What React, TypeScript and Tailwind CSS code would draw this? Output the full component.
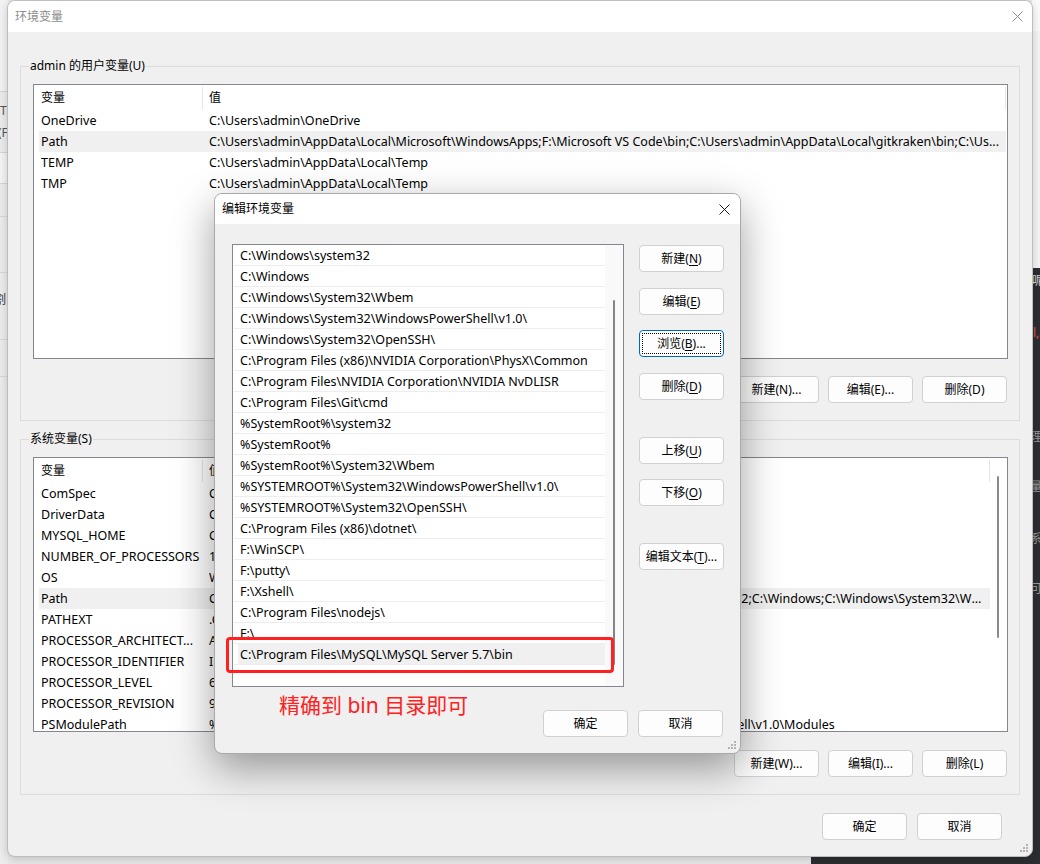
import React from "react";

type Row = { name: string; value: string };

const userRows: Row[] = [
  { name: "OneDrive", value: "C:\\Users\\admin\\OneDrive" },
  {
    name: "Path",
    value:
      "C:\\Users\\admin\\AppData\\Local\\Microsoft\\WindowsApps;F:\\Microsoft VS Code\\bin;C:\\Users\\admin\\AppData\\Local\\gitkraken\\bin;C:\\Us...",
  },
  { name: "TEMP", value: "C:\\Users\\admin\\AppData\\Local\\Temp" },
  { name: "TMP", value: "C:\\Users\\admin\\AppData\\Local\\Temp" },
];

const sysRows: Row[] = [
  { name: "ComSpec", value: "C:\\Windows\\system32\\cmd.exe" },
  { name: "DriverData", value: "C:\\Windows\\System32\\Drivers\\DriverData" },
  { name: "MYSQL_HOME", value: "C:\\Program Files\\MySQL\\MySQL Server 5.7" },
  { name: "NUMBER_OF_PROCESSORS", value: "16" },
  { name: "OS", value: "Windows_NT" },
  {
    name: "Path",
    value:
      "C:\\Program Files (x86)\\Common Files\\Oracle\\Java\\javapath;C:\\Go\\bin\\;C:\\Windows\\system32;C:\\Windows;C:\\Windows\\System32\\Wb...",
  },
  { name: "PATHEXT", value: ".COM;.EXE;.BAT;.CMD;.VBS;.VBE;.JS;.JSE;.WSF;.WSH;.MSC" },
  { name: "PROCESSOR_ARCHITECT...", value: "AMD64" },
  { name: "PROCESSOR_IDENTIFIER", value: "Intel64 Family 6 Model 165 Stepping 5, GenuineIntel" },
  { name: "PROCESSOR_LEVEL", value: "6" },
  { name: "PROCESSOR_REVISION", value: "9e0d" },
  {
    name: "PSModulePath",
    value: "%ProgramFiles%\\WindowsPowerShell\\Modules;C:\\WINDOWS\\system32\\WindowsPowerShell\\v1.0\\Modules",
  },
];

const pathItems = [
  "C:\\Windows\\system32",
  "C:\\Windows",
  "C:\\Windows\\System32\\Wbem",
  "C:\\Windows\\System32\\WindowsPowerShell\\v1.0\\",
  "C:\\Windows\\System32\\OpenSSH\\",
  "C:\\Program Files (x86)\\NVIDIA Corporation\\PhysX\\Common",
  "C:\\Program Files\\NVIDIA Corporation\\NVIDIA NvDLISR",
  "C:\\Program Files\\Git\\cmd",
  "%SystemRoot%\\system32",
  "%SystemRoot%",
  "%SystemRoot%\\System32\\Wbem",
  "%SYSTEMROOT%\\System32\\WindowsPowerShell\\v1.0\\",
  "%SYSTEMROOT%\\System32\\OpenSSH\\",
  "C:\\Program Files (x86)\\dotnet\\",
  "F:\\WinSCP\\",
  "F:\\putty\\",
  "F:\\Xshell\\",
  "C:\\Program Files\\nodejs\\",
  "F:\\",
  "C:\\Program Files\\MySQL\\MySQL Server 5.7\\bin",
];

const CloseX = ({ color }: { color: string }) => (
  <svg width="11" height="11" viewBox="0 0 11 11">
    <path d="M0.5 0.5 L10.5 10.5 M10.5 0.5 L0.5 10.5" stroke={color} strokeWidth="1" fill="none" />
  </svg>
);

const Grip = () => (
  <svg width="9" height="9" viewBox="0 0 9 9">
    <rect x="6" y="0" width="2" height="2" fill="#b4b4b4" />
    <rect x="3" y="3" width="2" height="2" fill="#b4b4b4" />
    <rect x="6" y="3" width="2" height="2" fill="#b4b4b4" />
    <rect x="0" y="6" width="2" height="2" fill="#b4b4b4" />
    <rect x="3" y="6" width="2" height="2" fill="#b4b4b4" />
    <rect x="6" y="6" width="2" height="2" fill="#b4b4b4" />
  </svg>
);

type BtnProps = {
  pre: string;
  mn?: string;
  post?: string;
  focused?: boolean;
  className?: string;
};

const Btn = ({ pre, mn, post = "", focused = false, className = "" }: BtnProps) => (
  <div
    className={`relative h-[27px] w-[85px] shrink-0 flex items-center justify-center rounded-[4px] border bg-[#fdfdfd] text-[12px] text-black ${
      focused ? "border-[#0067c0]" : "border-[#d0d0d0]"
    } ${className}`}
  >
    {focused && <div className="absolute inset-[2px] border border-dotted border-black" />}
    <span>
      {pre}
      {mn && <span className="underline underline-offset-2">{mn}</span>}
      {post}
    </span>
  </div>
);

const PlainBtn = ({ label, className = "" }: { label: string; className?: string }) => (
  <div
    className={`h-[27px] w-[85px] shrink-0 flex items-center justify-center rounded-[4px] border border-[#d0d0d0] bg-[#fdfdfd] text-[12px] text-black ${className}`}
  >
    {label}
  </div>
);

const VarList = ({ rows, selected, scroll }: { rows: Row[]; selected: number; scroll: boolean }) => (
  <div className="flex h-[275px] w-[975px] border border-[#828790] bg-white overflow-hidden">
    <div className="flex-1 min-w-0 flex flex-col">
      <div className="flex h-[25px] shrink-0">
        <div className="w-[169px] pl-[7px] flex items-center border-r border-[#e5e5e5] mt-[2px] mb-[1px]">变量</div>
        <div
          className={`flex-1 pl-[6px] flex items-center mt-[2px] mb-[1px] border-r border-[#e5e5e5] ${
            scroll ? "" : "mr-[1px]"
          }`}
        >
          值
        </div>
      </div>
      <div className={`ml-[5px] text-[12.5px] ${scroll ? "" : "mr-[1px]"}`}>
        {rows.map((r, i) => (
          <div key={r.name} className={`flex h-[21px] items-center pt-[1px] ${i === selected ? "bg-[#f0f0f0]" : ""}`}>
            <div className="w-[170px] shrink-0 pl-[2px] whitespace-nowrap overflow-hidden">{r.name}</div>
            <div className="flex-1 min-w-0 whitespace-nowrap overflow-hidden text-ellipsis pr-[2px]">{r.value}</div>
          </div>
        ))}
      </div>
    </div>
    {scroll && (
      <div className="w-[17px] shrink-0 bg-white pt-[18px] pl-[7px]">
        <div className="w-[2px] h-[162px] rounded-full bg-[#8a8a8a]" />
      </div>
    )}
  </div>
);

const Group = ({ label, children, className = "" }: { label: string; children: React.ReactNode; className?: string }) => (
  <div className={`relative border border-[#dcdcdc] px-[12px] ${className}`}>
    <div className="absolute left-[8px] -top-[9px] bg-[#f0f0f0] px-[1px] leading-[16px]">{label}</div>
    {children}
  </div>
);

export default function App() {
  return (
    <div className="relative w-[1040px] h-[864px] overflow-hidden bg-[#e8e8e8] text-[12px] text-black font-['Noto_Sans','Noto_Sans_CJK_SC',sans-serif]">
      {/* windows behind */}
      <div className="absolute left-0 top-0 w-[8px] h-[864px] bg-[#ececec]">
        <div className="h-[92px] border-b border-[#d6d6d6] bg-[#f3f3f3]" />
        <div className="h-[61px] border-b border-[#d6d6d6] relative overflow-hidden">
          <span className="absolute -left-[4px] top-[10px] text-[#555]">IT</span>
          <span className="absolute -left-[2px] top-[32px] text-[#555]">(F</span>
        </div>
        <div className="h-[31px] border-b border-[#d6d6d6] bg-[#f4f4f4]" />
        <div className="h-[33px] border-b border-[#d6d6d6]" />
        <div className="h-[56px] border-b border-[#d6d6d6]" />
        <div className="h-[67px] border-b border-[#d6d6d6] relative overflow-hidden">
          <span className="absolute -left-[6px] top-[18px] text-[#333]">割</span>
        </div>
        <div className="h-[37px] border-b border-[#d6d6d6]" />
      </div>
      <div className="absolute left-[1032px] top-0 w-[8px] h-[268px] bg-[#f4f4f4] border-t-[31px] border-[#fbfbfb]" />
      <div className="absolute left-[811px] top-[268px] right-0 bottom-0 bg-[#2b2d30] overflow-hidden">
        <span className="absolute left-[221px] top-[4px] text-[#d8d8d8]">呢</span>
        <span className="absolute left-[222px] top-[56px] text-[#e25050]">l,</span>
        <span className="absolute left-[219px] top-[160px] text-[#9a9a9a]">理</span>
        <span className="absolute left-[219px] top-[210px] text-[#9a9a9a]">量</span>
        <span className="absolute left-[219px] top-[262px] text-[#9a9a9a]">系</span>
        <span className="absolute left-[219px] top-[312px] text-[#9a9a9a]">可</span>
      </div>

      {/* main window */}
      <div className="absolute left-[7px] top-0 w-[1026px] h-[857px] flex flex-col rounded-[8px] border border-[#bdbdbd] bg-[#f0f0f0] shadow-[0_2px_10px_rgba(0,0,0,0.18)] overflow-hidden">
        <div className="h-[31px] shrink-0 bg-white flex items-center justify-between pl-[7px] pr-[9px]">
          <span className="text-[#8c8c8c]">环境变量</span>
          <CloseX color="#8c8c8c" />
        </div>
        <div className="flex-1 flex flex-col pt-[34px] pl-[12px] pr-[12px] relative">
          <Group label="admin 的用户变量(U)" className="h-[355px] pt-[17px]">
            <VarList rows={userRows} selected={1} scroll={false} />
            <div className="flex justify-end gap-[9px] mt-[17px]">
              <PlainBtn label="新建(N)..." />
              <PlainBtn label="编辑(E)..." />
              <PlainBtn label="删除(D)" />
            </div>
          </Group>
          <Group label="系统变量(S)" className="h-[356px] mt-[18px] pt-[17px]">
            <VarList rows={sysRows} selected={5} scroll={true} />
            <div className="flex justify-end gap-[9px] mt-[18px]">
              <PlainBtn label="新建(W)..." />
              <PlainBtn label="编辑(I)..." />
              <PlainBtn label="删除(L)" />
            </div>
          </Group>
          <div className="flex justify-end gap-[10px] mt-[18px] pr-[18px]">
            <PlainBtn label="确定" />
            <PlainBtn label="取消" />
          </div>
          <div className="absolute right-[3px] bottom-[3px]">
            <Grip />
          </div>
        </div>
      </div>

      {/* edit dialog */}
      <div className="absolute left-[214px] top-[193px] w-[527px] h-[561px] flex flex-col rounded-[8px] border border-[#a9a9a9] bg-[#f0f0f0] shadow-[0_14px_40px_rgba(0,0,0,0.38)] overflow-hidden">
        <div className="h-[30px] shrink-0 bg-white flex items-center justify-between pl-[7px] pr-[10px]">
          <span>编辑环境变量</span>
          <CloseX color="#1a1a1a" />
        </div>
        <div className="flex-1 flex flex-col pt-[20px] pl-[17px] relative">
          <div className="flex">
            <div className="relative w-[392px] h-[443px]">
              <div className="flex w-full h-full border border-[#828790] bg-white overflow-hidden">
                <div className="w-[372px] pl-[1px] text-[12.5px]">
                  {pathItems.map((p, i) => (
                    <div key={p} className="h-[21px] border-b border-[#ededed]">
                      <div
                        className={`h-full flex items-center pt-[3px] whitespace-nowrap ${
                          i === pathItems.length - 1 ? "ml-[4px] pl-[2px] bg-[#f0f0f0]" : "pl-[6px]"
                        }`}
                      >
                        {p}
                      </div>
                    </div>
                  ))}
                </div>
                <div className="flex-1 bg-[#f9f9f9] pt-[55px] pl-[8px]">
                  <div className="w-[2px] h-[365px] rounded-full bg-[#858585]" />
                </div>
              </div>
              <div className="absolute -left-[6px] top-[393px] w-[388px] h-[36px] border-[3px] border-[#ff2020] rounded-[4px]" />
            </div>
            <div className="ml-[15px] mt-[1px] flex flex-col">
              <Btn pre="新建(" mn="N" post=")" />
              <Btn pre="编辑(" mn="E" post=")" className="mt-[16px]" />
              <Btn pre="浏览(" mn="B" post=")..." focused className="mt-[15px]" />
              <Btn pre="删除(" mn="D" post=")" className="mt-[16px]" />
              <Btn pre="上移(" mn="U" post=")" className="mt-[37px]" />
              <Btn pre="下移(" mn="O" post=")" className="mt-[15px]" />
              <Btn pre="编辑文本(" mn="T" post=")..." className="mt-[37px]" />
            </div>
          </div>
          <div className="flex items-start">
            <div className="ml-[47px] mt-[4px] text-[21px] leading-[28px] text-[#ff2020]">精确到 bin 目录即可</div>
            <div className="ml-auto mr-[17px] mt-[23px] flex gap-[10px]">
              <PlainBtn label="确定" />
              <PlainBtn label="取消" />
            </div>
          </div>
          <div className="absolute right-[3px] bottom-[3px]">
            <Grip />
          </div>
        </div>
      </div>
    </div>
  );
}
